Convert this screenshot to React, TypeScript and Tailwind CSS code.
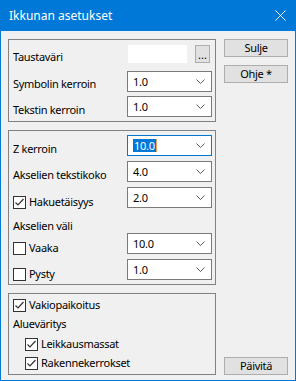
import React from "react";

const Chevron = () => (
  <svg width="9" height="5" viewBox="0 0 9 5" className="shrink-0">
    <path d="M0.5 0.5 L4.5 4.5 L8.5 0.5" fill="none" stroke="#5a5a5a" strokeWidth="1" />
  </svg>
);

const Combo = ({ value, focused }: { value: string; focused?: boolean }) => (
  <div
    className={
      "ml-auto mr-[3px] w-[85px] h-[21px] bg-white flex items-center pl-[5px] pr-[6px] " +
      (focused ? "border border-[#0078d7]" : "border border-[#7a7a7a]")
    }
  >
    {focused ? (
      <span className="flex items-center">
        <span className="bg-[#0078d7] text-white leading-[13px] h-[13px] px-[1px]">{value}</span>
        <span className="w-[1px] h-[13px] bg-[#e8a15a]" />
      </span>
    ) : (
      <span className="leading-[16px]">{value}</span>
    )}
    <span className="ml-auto">
      <Chevron />
    </span>
  </div>
);

const Check = ({ checked }: { checked?: boolean }) => (
  <div className="w-[13px] h-[13px] border border-[#333333] bg-white flex items-center justify-center shrink-0">
    {checked && (
      <svg width="11" height="11" viewBox="0 0 11 11">
        <path d="M1.5 5.5 L4 8 L9.5 2" fill="none" stroke="#333333" strokeWidth="1.2" />
      </svg>
    )}
  </div>
);

const Btn = ({ children, className }: { children: React.ReactNode; className?: string }) => (
  <div
    className={
      "w-[64px] h-[18px] bg-[#e1e1e1] border border-[#adadad] flex items-center justify-center leading-[14px] " +
      (className || "")
    }
  >
    {children}
  </div>
);

export default function App() {
  return (
    <div className="w-[296px] h-[381px] bg-[#0078d7] flex flex-col font-['Noto_Sans',sans-serif] text-black">
      <div className="h-[31px] shrink-0 flex items-center pl-[9px] pr-[10px] text-white text-[12px]">
        <span className="leading-[16px]">Ikkunan asetukset</span>
        <svg width="11" height="11" viewBox="0 0 11 11" className="ml-auto">
          <path d="M0.5 0.5 L10.5 10.5 M10.5 0.5 L0.5 10.5" stroke="white" strokeWidth="1" />
        </svg>
      </div>
      <div className="mx-[1px] mb-[1px] flex-1 bg-[#f0f0f0] flex pl-[7px] pt-[8px] text-[11px] tracking-[-0.3px]">
        <div className="w-[208px] flex flex-col">
          {/* Group 1 */}
          <div className="h-[83px] border border-[#828282] flex flex-col pl-[4px]">
            <div className="mt-[5px] h-[18px] flex items-start">
              <span className="mt-[4px] leading-[16px]">Taustaväri</span>
              <div className="ml-auto w-[59px] h-[18px] bg-white" />
              <div className="ml-[8px] mr-[5px] w-[15px] h-[18px] bg-[#e1e1e1] border border-[#adadad] flex items-end justify-center pb-[3px] leading-[8px] tracking-normal">
                ...
              </div>
            </div>
            <div className="mt-[8px] h-[21px] flex items-start">
              <span className="mt-[5px] leading-[16px]">Symbolin kerroin</span>
              <Combo value="1.0" />
            </div>
            <div className="mt-[4px] h-[21px] flex items-start">
              <span className="mt-[6px] leading-[16px]">Tekstin kerroin</span>
              <Combo value="1.0" />
            </div>
          </div>

          {/* Group 2 */}
          <div className="mt-[8px] h-[155px] border border-[#828282] flex flex-col pl-[4px]">
            <div className="mt-[4px] h-[21px] flex items-start">
              <span className="mt-[6px] leading-[16px]">Z kerroin</span>
              <Combo value="10.0" focused />
            </div>
            <div className="mt-[5px] h-[21px] flex items-start">
              <span className="mt-[6px] leading-[16px]">Akselien tekstikoko</span>
              <Combo value="4.0" />
            </div>
            <div className="mt-[5px] h-[21px] flex items-start">
              <div className="mt-[7px] h-[16px] flex items-center gap-[3px]">
                <Check checked />
                <span className="leading-[16px]">Hakuetäisyys</span>
              </div>
              <Combo value="2.0" />
            </div>
            <div className="mt-[10px] leading-[16px] h-[16px]">Akselien väli</div>
            <div className="mt-[-1px] h-[21px] flex items-start">
              <div className="mt-[7px] h-[16px] flex items-center gap-[3px]">
                <Check />
                <span className="leading-[16px]">Vaaka</span>
              </div>
              <Combo value="10.0" />
            </div>
            <div className="mt-[5px] h-[21px] flex items-start">
              <div className="mt-[7px] h-[16px] flex items-center gap-[3px]">
                <Check />
                <span className="leading-[16px]">Pysty</span>
              </div>
              <Combo value="1.0" />
            </div>
          </div>

          {/* Group 3 */}
          <div className="mt-[8px] h-[82px] border border-[#828282] flex flex-col pl-[4px]">
            <div className="mt-[3px] h-[16px] flex items-center gap-[3px]">
              <Check checked />
              <span className="leading-[16px]">Vakiopaikoitus</span>
            </div>
            <div className="mt-[3px] h-[16px] leading-[16px]">Alueväritys</div>
            <div className="mt-[4px] ml-[12px] h-[16px] flex items-center gap-[3px]">
              <Check checked />
              <span className="leading-[16px]">Leikkausmassat</span>
            </div>
            <div className="mt-[3px] ml-[12px] h-[16px] flex items-center gap-[3px]">
              <Check checked />
              <span className="leading-[16px]">Rakennekerrokset</span>
            </div>
          </div>
        </div>

        <div className="ml-[8px] flex flex-col pb-[5px]">
          <Btn>Sulje</Btn>
          <Btn className="mt-[8px]">Ohje *</Btn>
          <Btn className="mt-auto">Päivitä</Btn>
        </div>
      </div>
    </div>
  );
}
